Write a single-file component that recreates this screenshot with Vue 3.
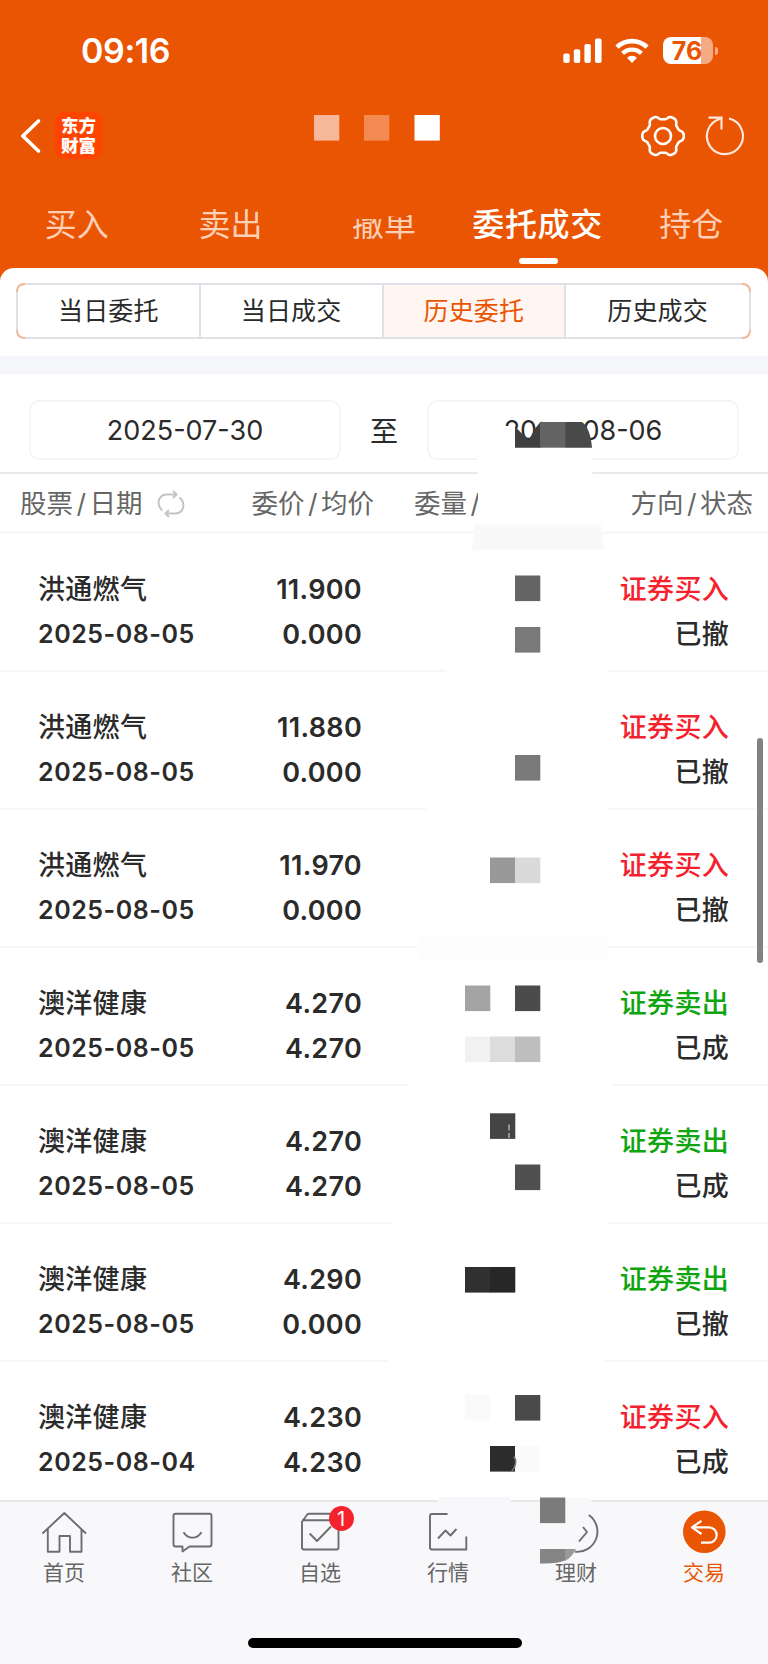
<script setup>
const tabs = ['买入', '卖出', '撤单', '委托成交', '持仓']
const segments = ['当日委托', '当日成交', '历史委托', '历史成交']
const orders = [
  { name: '洪通燃气', date: '2025-08-05', price: '11.900', avg: '0.000', side: 'buy', status: '已撤' },
  { name: '洪通燃气', date: '2025-08-05', price: '11.880', avg: '0.000', side: 'buy', status: '已撤' },
  { name: '洪通燃气', date: '2025-08-05', price: '11.970', avg: '0.000', side: 'buy', status: '已撤' },
  { name: '澳洋健康', date: '2025-08-05', price: '4.270', avg: '4.270', side: 'sell', status: '已成' },
  { name: '澳洋健康', date: '2025-08-05', price: '4.270', avg: '4.270', side: 'sell', status: '已成' },
  { name: '澳洋健康', date: '2025-08-05', price: '4.290', avg: '0.000', side: 'sell', status: '已撤' },
  { name: '澳洋健康', date: '2025-08-04', price: '4.230', avg: '4.230', side: 'buy', status: '已成' },
]

// Six-lobed gear outline, sampled in polar coordinates
const gear = (() => {
  const pts = []
  for (let i = 0; i < 180; i++) {
    const t = (i / 180) * Math.PI * 2
    const c = Math.cos(6 * t)
    const r = 18.7 + 2 * Math.tanh(1.7 * c) / Math.tanh(1.7)
    pts.push(`${(23 + r * Math.cos(t)).toFixed(2)} ${(23 + r * Math.sin(t)).toFixed(2)}`)
  }
  return 'M' + pts.join('L') + 'Z'
})()

// Privacy covers: plain patches first, then the pixel blocks [x, y, colour]
const patches = [
  [446, 668, 162, 8], [426, 806, 182, 8], [408, 1082, 204, 8],
  [391, 1220, 216, 8], [389, 1358, 216, 8],
]
const blocks = [
  [314, 115, '#f6b899'], [364, 115, '#f38a51'], [414.5, 115, '#fff'],
  [515, 575.5, '#656565'], [515, 627, '#797979'], [515, 755, '#797979'],
  [490, 857.5, '#999'], [515, 857.5, '#dadada'],
  [465, 985.5, '#a4a4a4'], [515, 985.5, '#4b4b4b'],
  [465, 1036.5, '#f1f1f1'], [490, 1036.5, '#dcdcdc'], [515, 1036.5, '#bebebe'],
  [490, 1113.3, '#444'], [515, 1164.5, '#505050'],
  [465, 1267, '#303030'], [490, 1267, '#272727'],
  [465, 1395, '#fafafa'], [515, 1395, '#4a4a4a'],
  [490, 1446, '#2c2c2c'], [515, 1446, '#fafafa'],
  [540, 1497.5, '#7b7b7b'],
]
</script>

<template>
  <div class="screen">
    <header class="top">
      <div class="status">
        <span class="time">09:16</span>
        <div class="signals">
          <svg class="bars" width="40" height="26" viewBox="0 0 40 26" fill="#fff">
            <rect x="0.3" y="15.5" width="6.4" height="9.5" rx="2" />
            <rect x="10.8" y="11.3" width="6.4" height="13.7" rx="2" />
            <rect x="21.4" y="6" width="6.4" height="19" rx="2" />
            <rect x="32" y="0.5" width="6.6" height="24.5" rx="2" />
          </svg>
          <svg class="wifi" width="34" height="26" viewBox="0 0 34 26" fill="none" stroke="#fff">
            <path d="M2 9.2a21.5 21.5 0 0 1 30 0" stroke-width="4.6" />
            <path d="M7.6 15.4a13.5 13.5 0 0 1 18.8 0" stroke-width="4.4" />
            <path d="M17 25l-5-5.200a7.200 7.200 0 0 1 10 0z" fill="#fff" stroke="none" />
          </svg>
          <div class="battery"><span>76</span></div>
          <i class="cap"></i>
        </div>
      </div>
      <div class="nav">
        <svg class="back" width="24" height="40" viewBox="0 0 24 40" fill="none" stroke="#fff" stroke-width="3.6" stroke-linecap="round" stroke-linejoin="round">
          <path d="M18.500 5 2.800 20 18.500 35" />
        </svg>
        <div class="logo"><span>东方</span><span>财富</span></div>
        <div class="actions">
          <svg width="46" height="46" viewBox="0 0 46 46" fill="none" stroke="#fff" stroke-width="2.600">
            <path :d="gear" />
            <circle cx="23" cy="23" r="8" />
          </svg>
          <svg width="42" height="46" viewBox="0 0 42 46" fill="none" stroke="#ffe9dc" stroke-width="2.100">
            <path d="M25 5.600a18 18 0 1 1-8.500.1" />
            <path d="M4.500 4.600H17.500V16.500" />
          </svg>
        </div>
      </div>
      <nav class="tabs">
        <span v-for="t in tabs" :key="t" :class="['tab', { on: t === '委托成交' }]">{{ t }}</span>
      </nav>
    </header>

    <main class="panel">
      <div class="segwrap">
        <div class="segs">
          <span v-for="s in segments" :key="s" :class="['seg', { on: s === '历史委托' }]">{{ s }}</span>
        </div>
      </div>
      <div class="band"></div>
      <div class="dates">
        <div class="date">2025-07-30</div>
        <span class="to">至</span>
        <div class="date">2025-08-06</div>
      </div>
      <div class="thead">
        <span class="h1">股票<b>/</b>日期
          <svg width="30" height="28" viewBox="0 0 30 28" fill="none" stroke="#c4c4c4" stroke-width="2">
            <path d="M6.500 20.500C0 15 2 5 10.500 4.500H20M17 1l3.500 3.500L17 8M23.500 7.500C30 13 28 23 19.500 23.500H10M13 20l-3.500 3.500L13 27" />
          </svg>
        </span>
        <span class="h2">委价<b>/</b>均价</span>
        <span class="h3">委量<b>/</b></span>
        <span class="h4">方向<b>/</b>状态</span>
      </div>
      <div v-for="(o, i) in orders" :key="i" class="row">
        <div class="c1"><p class="cn">{{ o.name }}</p><p class="dt">{{ o.date }}</p></div>
        <div class="c2"><p>{{ o.price }}</p><p>{{ o.avg }}</p></div>
        <div class="c3">
          <p :class="['cn', o.side]">{{ o.side === 'buy' ? '证券买入' : '证券卖出' }}</p>
          <p class="cn">{{ o.status }}</p>
        </div>
      </div>
    </main>

    <footer class="tabbar">
      <div class="items">
        <div class="item">
          <svg class="ic" viewBox="0 0 56 48"><path d="M6.500 25.500 28.300 5 50 25.500M11.800 21v22.800h11.700V28h10.500v15.800h11.500V21" /></svg>
          <span>首页</span>
        </div>
        <div class="item">
          <svg class="ic" viewBox="0 0 56 48">
            <path d="M11.500 5.800h34a2 2 0 0 1 2 2v28.700a2 2 0 0 1-2 2H25.500l-7 5v-5h-7a2 2 0 0 1-2-2V7.800a2 2 0 0 1 2-2z" />
            <path d="M19.500 24.200c4.500 7.200 13.500 7.200 18 0" />
          </svg>
          <span>社区</span>
        </div>
        <div class="item">
          <svg class="ic" viewBox="0 0 56 48">
            <path d="M10 13v26.500a2 2 0 0 0 2 2h32.500a2 2 0 0 0 2-2V13M10 14l5-7.200q.8-1 2-1H41M10 12.300H46" />
            <path d="M17.700 25.500 25 33 39 18.500" />
          </svg>
          <i class="badge">1</i>
          <span>自选</span>
        </div>
        <div class="item">
          <svg class="ic" viewBox="0 0 56 48"><path d="M27.500 6H12a2 2 0 0 0-2 2v31.500a2 2 0 0 0 2 2h34.300V28.500M18 30.500l7.500-8 5 5 6-6.500" /></svg>
          <span>行情</span>
        </div>
        <div class="item">
          <svg class="ic" viewBox="0 0 56 48"><path d="M40.800 7A20.300 20.300 0 0 1 27 43.800M35 19l4 5-8 9.500" /></svg>
          <span>理财</span>
        </div>
        <div class="item active">
          <svg class="ic" viewBox="0 0 56 48">
            <circle cx="28.300" cy="23.700" r="21.300" fill="#ea5504" stroke="none" />
            <path d="M25.500 12.800 16 19.300 25.500 26M16 19.300H33a7.700 7.700 0 0 1 0 15.400H25" stroke="#fff" stroke-width="2.200" />
          </svg>
          <span>交易</span>
        </div>
      </div>
      <div class="home"></div>
    </footer>

    <div class="scroll"></div>
    <svg class="cover" width="768" height="1664" viewBox="0 0 768 1664">
      <path d="M348 204H415L411 214 404 218 388 216V219H350z" fill="#ea5504" />
      <path d="M17 292Q17 284 25 284M17 330Q17 338 25 338M742 284Q750 284 750 292M742 338Q750 338 750 330" fill="none" stroke="#f3b798" stroke-width="1.800" />
      <path d="M478 457H592.500V524H478z" fill="#fff" />
      <path d="M474.500 524.500H601L605 550H472z" fill="#f9f9f9" />
      <path d="M502 430 515 427V449H502zM545 414H584V422H541z" fill="#fff" />
      <path d="M515 427C519 430 524 436 529 440 533 432 536 426 541 422V447.700H515z" fill="#3f3f3f" />
      <path d="M540 422H566V447.700H540z" fill="#636363" />
      <path d="M565.500 422H582C588 426 591 436 592 447.700H565.500z" fill="#494949" />
      <rect x="418" y="935" width="190" height="26" fill="#fdfdfd" />
      <rect v-for="(p, i) in patches" :key="'p' + i" :x="p[0]" :y="p[1]" :width="p[2]" :height="p[3]" fill="#fff" />
      <path d="M438 1497H511V1503H438zM540 1498H591V1503H540z" fill="#f8f8fb" />
      <rect v-for="(b, i) in blocks" :key="'b' + i" :x="b[0]" :y="b[1]" width="25.300" height="25.600" :fill="b[2]" />
      <path d="M509 1124.500v6M509 1133v5" stroke="#aaa" stroke-width="1.500" />
      <path d="M513.500 1457c4 2 2 11-2 14" stroke="#777" stroke-width="1.500" fill="none" />
      <path d="M540 1549H566V1560Q558 1564 540 1563.500z" fill="#858585" />
      <path d="M565 1549H576Q572 1557 565 1561z" fill="#999" />
    </svg>
  </div>
</template>

<style>
body { margin: 0; }
</style>

<style scoped>
.screen {
  position: relative;
  width: 768px;
  height: 1664px;
  overflow: hidden;
  display: flex;
  flex-direction: column;
  background: #fff;
  color: #2b2b2b;
  font-family: Inter, "Noto Sans CJK SC", sans-serif;
}
p { margin: 0; }
.top {
  height: 286px;
  flex: none;
  margin-bottom: -18px;
  background: #ea5504;
  color: #fff;
}
.status {
  height: 101px;
  box-sizing: border-box;
  padding: 0 50px 0 81px;
  display: flex;
  justify-content: space-between;
  align-items: center;
}
.time { font-size: 34px; font-weight: 600; letter-spacing: -0.4px; }
.signals { display: flex; align-items: center; }
.wifi { margin-left: 12px; }
.battery {
  width: 50px;
  height: 27px;
  margin-left: 14px;
  border-radius: 8px;
  background: linear-gradient(to right, #fff 76%, #f5ab82 76%);
  color: #ea5504;
  font-size: 25px;
  font-weight: 700;
  line-height: 28px;
  text-align: center;
}
.battery span { margin-left: -2px; }
.cap { width: 3px; height: 8px; margin-left: 2px; border-radius: 0 3px 3px 0; background: #f5ab82; }
.nav { height: 69px; padding: 0 22px 0 20px; display: flex; align-items: center; }
.logo {
  width: 47px;
  height: 47px;
  margin-left: 11px;
  border-radius: 9px;
  background: #ff4400;
  display: flex;
  flex-direction: column;
  align-items: center;
  justify-content: center;
  font-size: 17.500px;
  font-weight: 900;
  line-height: 19.500px;
}
.actions { margin-left: auto; display: flex; gap: 18px; }
.tabs { height: 97px; display: grid; grid-template-columns: repeat(5, 1fr); }
.tab {
  position: relative;
  height: 110px;
  line-height: 110px;
  text-align: center;
  font-size: 32px;
  font-weight: 400;
  color: #fdcfb6;
}
.tab.on { color: #fff; font-weight: 500; letter-spacing: 0.7px; }
.tab.on::after {
  content: "";
  position: absolute;
  left: calc(50% - 19px);
  top: 87.500px;
  width: 39px;
  height: 6.500px;
  border-radius: 3px;
  background: #fff;
}
.panel { position: relative; flex: none; background: #fff; border-radius: 14px 14px 0 0; }
.segwrap { height: 88px; padding: 15px 17px 0 16px; box-sizing: border-box; }
.segs {
  height: 56px;
  box-sizing: border-box;
  display: grid;
  grid-template-columns: repeat(4, 1fr);
  border: 2px solid #e0e0e7;
  border-radius: 8px;
  overflow: hidden;
}
.seg { text-align: center; font-size: 25px; line-height: 53px; font-weight: 400; letter-spacing: 0.200px; border-right: 2px solid #e0e0e7; }
.seg:last-child { border-right: 0; }
.seg.on { background: #fff5f1; color: #ea5504; }
.band { height: 18px; background: #f5f6fa; }
.dates { height: 100px; display: flex; align-items: center; padding: 13px 29px 0; box-sizing: border-box; border-bottom: 2px solid #e9e9e9; }
.date {
  width: 312px;
  height: 60px;
  box-sizing: border-box;
  border: 2px solid #f5f5f5;
  border-radius: 10px;
  text-align: center;
  font-size: 27px;
  line-height: 58px;
}
.to { flex: 1; text-align: center; font-size: 28px; }
.thead {
  height: 60px;
  box-sizing: border-box;
  border-bottom: 3px solid #f8f8f8;
  display: grid;
  grid-template-columns: 187px 187px 118px 1fr;
  padding: 0 15px 0 20px;
  color: #666;
  font-size: 26.500px;
  line-height: 59px;
  white-space: nowrap;
}
.thead b { font-weight: 400; padding: 0 3.500px; }
.h1 { display: flex; align-items: center; }
.h1 svg { margin-left: 13px; }
.h2 { text-align: right; }
.h2 { padding-right: 20px; }
.h3 { padding-left: 20px; }
.h4 { text-align: right; }
.row {
  height: 138px;
  box-sizing: border-box;
  border-bottom: 2px solid #f7f7f7;
  padding: 33px 39px 0 38px;
  display: grid;
  grid-template-columns: 180px 144px 1fr;
  font-size: 27px;
  font-weight: 600;
  line-height: 45px;
}
.row:last-child { border-bottom: 0; }
.cn { font-size: 27px; font-weight: 500; letter-spacing: 0.300px; }
.dt { font-size: 25px; letter-spacing: 0.550px; }
.c2, .c3 { text-align: right; }
.c2 { letter-spacing: 0.300px; }
.buy { color: #f5222d; }
.sell { color: #0ea50e; }
.tabbar { flex: 1; border-top: 2px solid #e6e6e8; background: #f8f8fb; display: flex; flex-direction: column; align-items: center; }
.items { width: 768px; display: grid; grid-template-columns: repeat(6, 1fr); }
.item { position: relative; display: flex; flex-direction: column; align-items: center; padding-top: 6px; color: #666; font-size: 21px; line-height: 34px; }
.ic { width: 56px; height: 48px; fill: none; stroke: #6d6d70; stroke-width: 1.900; stroke-linejoin: round; }
.item.active { color: #ea5504; }
.badge {
  position: absolute;
  left: 72.500px;
  top: 4px;
  width: 25px;
  height: 25px;
  border-radius: 50%;
  background: #f5222d;
  color: #fff;
  font-size: 20px;
  font-style: normal;
  line-height: 26px;
  text-align: center;
}
.home { width: 274px; height: 10px; margin: 48px 0 0 2px; border-radius: 5px; background: #000; }
.scroll { position: absolute; left: 757px; top: 738px; width: 6px; height: 225px; border-radius: 3px; background: #828282; }
.cover { position: absolute; left: 0; top: 0; }
</style>
